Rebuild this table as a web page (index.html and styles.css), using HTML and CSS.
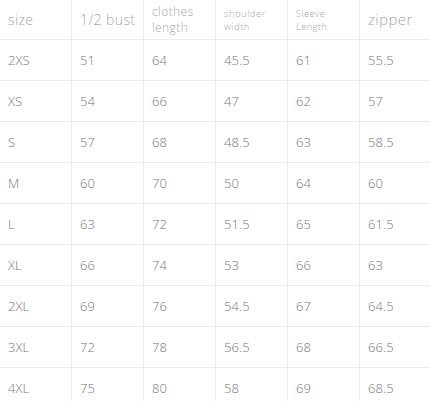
FILE: index.html
```html
<!DOCTYPE html>
<html>
<head>
<meta charset="utf-8">
<link rel="stylesheet" href="styles.css">
</head>
<body>
<div class="table">
  <div class="row head">
    <div class="cell h-size">size</div>
    <div class="cell h-bust">1/2 bust</div>
    <div class="cell h-len"><span>clothes</span><span>length</span></div>
    <div class="cell h-sh"><span>shoulder</span><span>width</span></div>
    <div class="cell h-sl"><span>Sleeve</span><span>Length</span></div>
    <div class="cell h-zip">zipper</div>
  </div>
  <div class="row"><div class="cell">2XS</div><div class="cell">51</div><div class="cell">64</div><div class="cell">45.5</div><div class="cell">61</div><div class="cell">55.5</div></div>
  <div class="row"><div class="cell">XS</div><div class="cell">54</div><div class="cell">66</div><div class="cell">47</div><div class="cell">62</div><div class="cell">57</div></div>
  <div class="row"><div class="cell">S</div><div class="cell">57</div><div class="cell">68</div><div class="cell">48.5</div><div class="cell">63</div><div class="cell">58.5</div></div>
  <div class="row"><div class="cell">M</div><div class="cell">60</div><div class="cell">70</div><div class="cell">50</div><div class="cell">64</div><div class="cell">60</div></div>
  <div class="row"><div class="cell">L</div><div class="cell">63</div><div class="cell">72</div><div class="cell">51.5</div><div class="cell">65</div><div class="cell">61.5</div></div>
  <div class="row"><div class="cell">XL</div><div class="cell">66</div><div class="cell">74</div><div class="cell">53</div><div class="cell">66</div><div class="cell">63</div></div>
  <div class="row"><div class="cell">2XL</div><div class="cell">69</div><div class="cell">76</div><div class="cell">54.5</div><div class="cell">67</div><div class="cell">64.5</div></div>
  <div class="row"><div class="cell">3XL</div><div class="cell">72</div><div class="cell">78</div><div class="cell">56.5</div><div class="cell">68</div><div class="cell">66.5</div></div>
  <div class="row"><div class="cell">4XL</div><div class="cell">75</div><div class="cell">80</div><div class="cell">58</div><div class="cell">69</div><div class="cell">68.5</div></div>
</div>
</body>
</html>
```

FILE: styles.css
```css
html, body {
  margin: 0;
  padding: 0;
  background: #ffffff;
  overflow: hidden;
}
.table {
  width: 430px;
  font-family: "Open Sans", "Noto Sans", sans-serif;
  font-weight: 300;
  color: #777777;
}
.row {
  display: grid;
  grid-template-columns: 72px 72px 72px 72px 72px 70px;
  height: 41px;
  border-bottom: 1px solid #ececec;
  box-sizing: border-box;
}
.row.head {
  height: 40px;
  color: #a8a8a8;
}
.cell {
  display: flex;
  align-items: center;
  padding-left: 8px;
  border-right: 1px solid #ececec;
  font-size: 13px;
  letter-spacing: 0.1px;
  line-height: 1;
}
.cell:last-child {
  border-right: none;
}
.h-len, .h-sh, .h-sl {
  flex-direction: column;
  align-items: flex-start;
  justify-content: center;
}
.h-size, .h-bust {
  font-size: 14px;
  letter-spacing: 0.4px;
}
.h-len {
  font-size: 12px;
  line-height: 16px;
  letter-spacing: 0.4px;
}
.h-sh {
  font-size: 9.5px;
  line-height: 13px;
  letter-spacing: 0.5px;
}
.h-sl {
  font-size: 9.5px;
  line-height: 13px;
  letter-spacing: 0.3px;
}
.h-zip {
  font-size: 15px;
  letter-spacing: 0.4px;
}
```
